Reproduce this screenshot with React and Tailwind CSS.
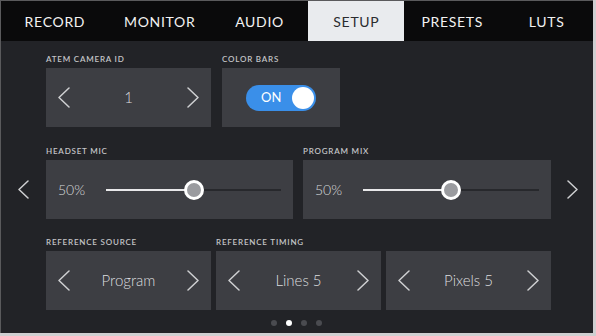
import React from 'react'

const tabs = [
  { name: 'RECORD', w: 'w-[108px]' },
  { name: 'MONITOR', w: 'w-[102px]' },
  { name: 'AUDIO', w: 'w-[98px]' },
  { name: 'SETUP', w: 'w-[96px]', active: true },
  { name: 'PRESETS', w: 'w-[96px]' },
  { name: 'LUTS', w: 'w-[93px]' },
]

function Chevron({ dir = 'left', w = 12, h = 21 }) {
  const pts = dir === 'left' ? `${w - 1},1 1,${h / 2} ${w - 1},${h - 1}` : `1,1 ${w - 1},${h / 2} 1,${h - 1}`
  return (
    <svg width={w} height={h} viewBox={`0 0 ${w} ${h}`} className="shrink-0">
      <polyline points={pts} fill="none" stroke="#cfd0d2" strokeWidth="1.5" strokeLinejoin="round" strokeLinecap="round" />
    </svg>
  )
}

function Label({ children, className = '' }) {
  return (
    <div className={`mb-[4px] h-[10px] text-[8px] font-semibold leading-[10px] tracking-[0.1em] text-[#c4c5c8] ${className}`}>
      {children}
    </div>
  )
}

function Stepper({ value, className = '' }) {
  return (
    <div className={`flex h-[59px] items-center justify-between bg-[#3d3e43] px-[12px] ${className}`}>
      <Chevron dir="left" />
      <span className="text-[15px] font-light text-[#dcdddf]">{value}</span>
      <Chevron dir="right" />
    </div>
  )
}

function Slider({ className = '' }) {
  return (
    <div className={`flex h-[59px] items-center bg-[#3d3e43] pl-[12px] pr-[12px] ${className}`}>
      <span className="w-[48px] text-[14px] font-light text-[#d8d9db]">50%</span>
      <div className="relative flex h-[20px] flex-1 items-center">
        <div className="h-[2px] w-1/2 bg-[#e8e8ea]" />
        <div className="h-[2px] w-1/2 bg-[#27282c]" />
        <div className="absolute left-1/2 top-1/2 h-[20px] w-[20px] -translate-x-1/2 -translate-y-1/2 rounded-full border-[3px] border-white bg-[#9a9b9f]" />
      </div>
    </div>
  )
}

export default function App() {
  return (
    <div className="h-[336px] w-[596px] bg-[#cfcfd1]" style={{ fontFamily: 'Lato, "Open Sans", sans-serif' }}>
      <div className="flex h-[333px] w-[593px] flex-col overflow-hidden border-l border-t border-[#5a5a5c] bg-[#222327]">
        <div className="flex h-[40px] shrink-0 bg-[#0a0a0b]">
          {tabs.map((t) => (
            <div
              key={t.name}
              className={`${t.w} flex items-center justify-center text-[14px] tracking-[0.05em] ${
                t.active ? 'bg-[#e9ebee] text-[#2b2c2f]' : 'text-[#f2f2f2]'
              }`}
            >
              {t.name}
            </div>
          ))}
        </div>

        <div className="flex flex-1">
          <div className="flex w-[45px] items-center justify-center pt-[4px]">
            <Chevron dir="left" w={11} h={19} />
          </div>

          <div className="flex w-[505px] flex-col pt-[13px]">
            <div className="flex gap-[11px]">
              <div className="w-[165px]">
                <Label>ATEM CAMERA ID</Label>
                <Stepper value="1" />
              </div>
              <div className="w-[118px]">
                <Label>COLOR BARS</Label>
                <div className="flex h-[59px] items-center justify-center bg-[#3d3e43]">
                  <div className="flex h-[26px] w-[70px] items-center justify-between rounded-full bg-[#3a8fe9] pl-[15px] pr-[2px]">
                    <span className="text-[13px] text-white">ON</span>
                    <div className="h-[22px] w-[22px] rounded-full bg-white" />
                  </div>
                </div>
              </div>
            </div>

            <div className="mt-[19px] flex gap-[10px]">
              <div className="w-[247px]">
                <Label>HEADSET MIC</Label>
                <Slider />
              </div>
              <div className="w-[248px]">
                <Label>PROGRAM MIX</Label>
                <Slider />
              </div>
            </div>

            <div className="mt-[18px] flex gap-[5px]">
              <div className="w-[165px]">
                <Label>REFERENCE SOURCE</Label>
                <Stepper value="Program" />
              </div>
              <div className="w-[335px]">
                <Label>REFERENCE TIMING</Label>
                <div className="flex gap-[5px]">
                  <Stepper value="Lines 5" className="w-[165px]" />
                  <Stepper value="Pixels 5" className="w-[165px]" />
                </div>
              </div>
            </div>

            <div className="mt-[10px] flex justify-center gap-[9px] pr-[5px]">
              <span className="h-[6px] w-[6px] rounded-full bg-[#4a4b50]" />
              <span className="h-[6px] w-[6px] rounded-full bg-white" />
              <span className="h-[6px] w-[6px] rounded-full bg-[#4a4b50]" />
              <span className="h-[6px] w-[6px] rounded-full bg-[#4a4b50]" />
            </div>
          </div>

          <div className="flex flex-1 items-center justify-center pt-[4px]">
            <Chevron dir="right" w={11} h={19} />
          </div>
        </div>
      </div>
    </div>
  )
}
